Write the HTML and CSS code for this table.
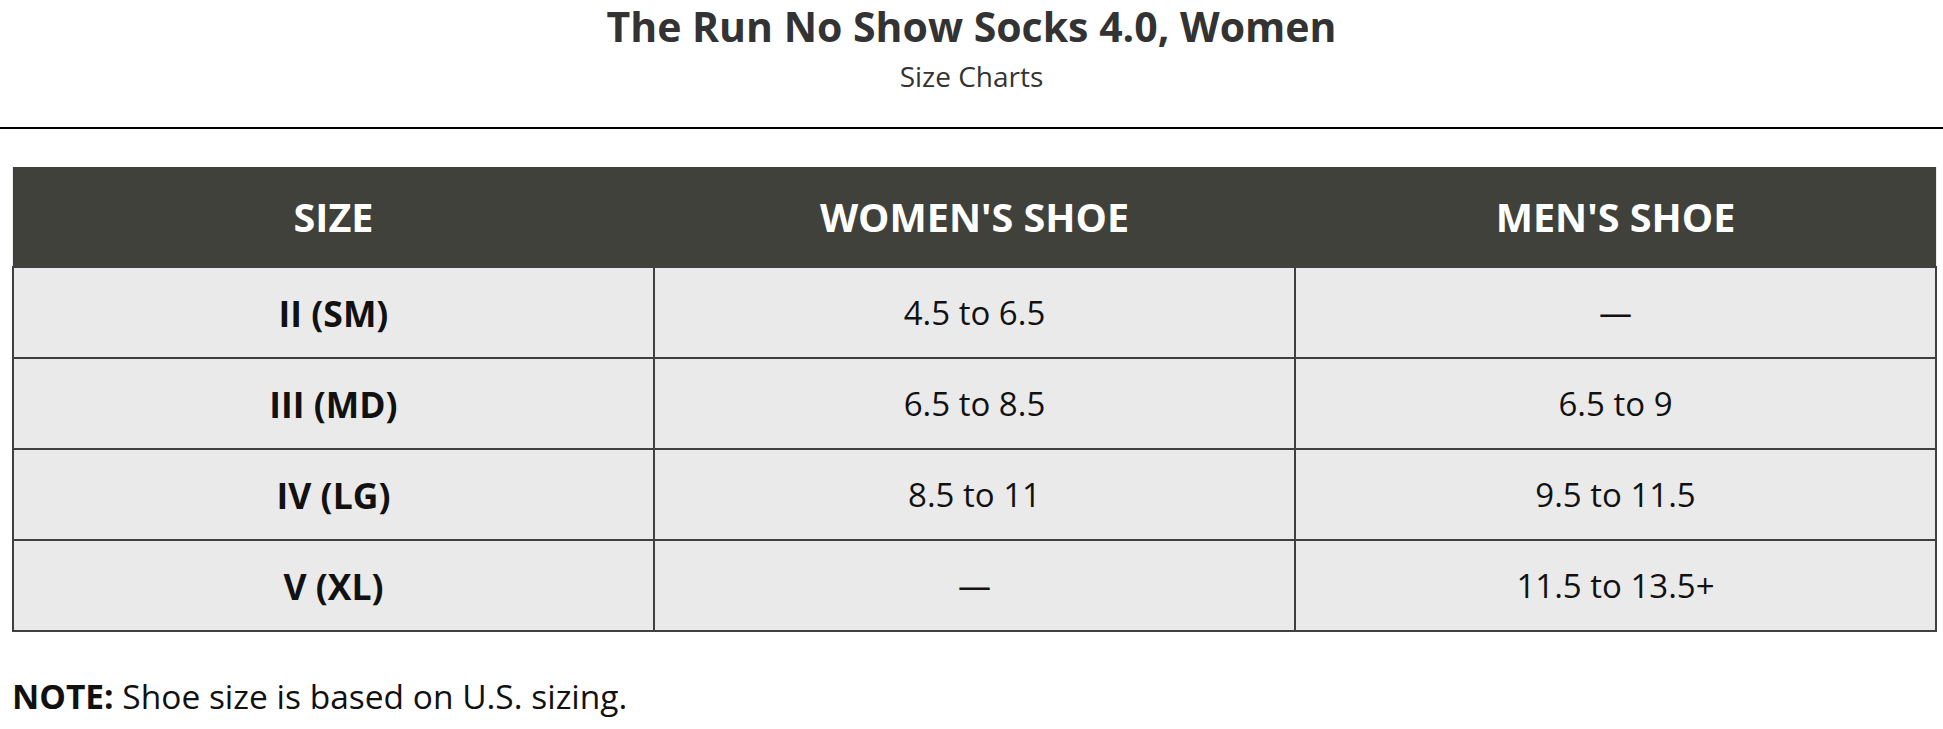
FILE: index.html
```html
<!DOCTYPE html>
<html lang="en">
<head>
<meta charset="utf-8">
<title>Size Charts</title>
<link rel="stylesheet" href="styles.css">
</head>
<body>
<header class="page-head">
  <h1 class="title">The Run No Show Socks 4.0, Women</h1>
  <p class="subtitle">Size Charts</p>
</header>
<main class="content">
  <table class="chart">
    <thead>
      <tr><th>SIZE</th><th>WOMEN'S SHOE</th><th>MEN'S SHOE</th></tr>
    </thead>
    <tbody>
      <tr><td class="label">II (SM)</td><td>4.5 to 6.5</td><td>—</td></tr>
      <tr><td class="label">III (MD)</td><td>6.5 to 8.5</td><td>6.5 to 9</td></tr>
      <tr><td class="label">IV (LG)</td><td>8.5 to 11</td><td>9.5 to 11.5</td></tr>
      <tr><td class="label">V (XL)</td><td>—</td><td>11.5 to 13.5+</td></tr>
    </tbody>
  </table>
  <p class="note"><strong>NOTE:</strong> Shoe size is based on U.S. sizing.</p>
</main>
</body>
</html>
```
FILE: styles.css
```css
html, body {
  margin: 0;
  padding: 0;
  background: #fff;
}
body {
  font-family: "Open Sans", "Noto Sans", sans-serif;
  color: #111;
}
.page-head {
  text-align: center;
  border-bottom: 2px solid #000;
  padding: 0 0 27px;
}
.title {
  margin: 0;
  font-size: 41px;
  line-height: 52px;
  font-weight: 700;
  color: #333;
}
.subtitle {
  margin: 0;
  font-size: 28px;
  line-height: 48px;
  color: #333;
}
.content {
  padding: 38px 6px 0 12px;
}
.chart {
  width: 100%;
  border-collapse: collapse;
  table-layout: fixed;
  background: #eaeaea;
}
.chart th {
  background: #41413c;
  color: #fff;
  font-size: 39.5px;
  font-weight: 700;
  height: 99px;
  padding: 0;
}
.chart td {
  border: 2px solid #404040;
  text-align: center;
  font-size: 33px;
  height: 89px;
  padding: 0;
  color: #111;
}
.chart td.label {
  font-weight: 700;
  font-size: 35.5px;
}
.note {
  margin: 41px 0 0;
  font-size: 33.5px;
  color: #111;
}
```
